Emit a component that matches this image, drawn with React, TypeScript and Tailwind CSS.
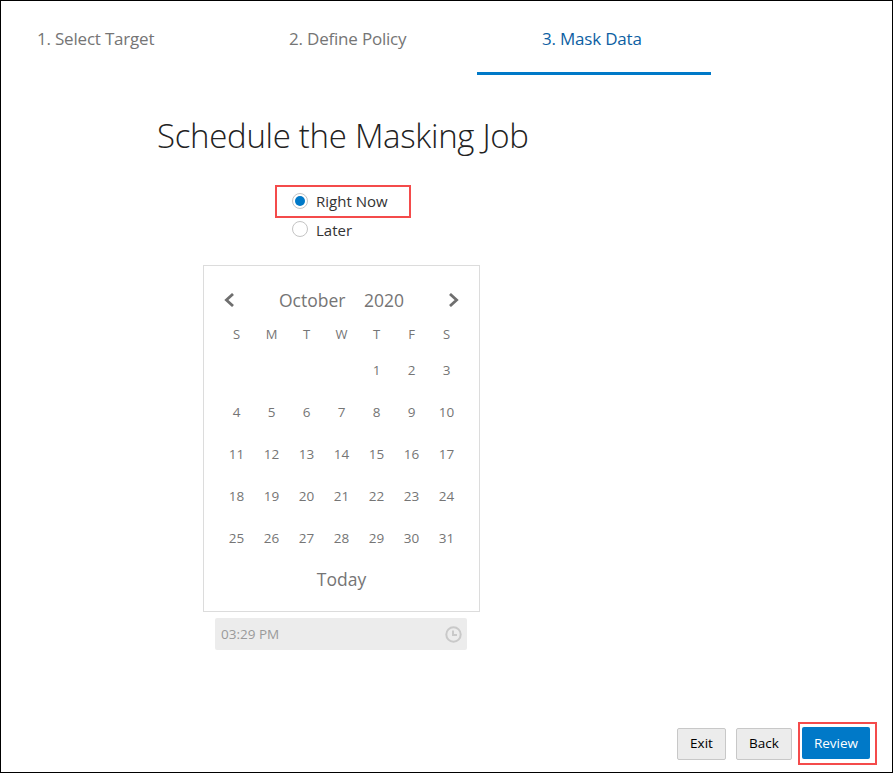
const weekdays = ["S", "M", "T", "W", "T", "F", "S"];
const leadingBlanks = 4;
const days = Array.from({ length: 31 }, (_, i) => i + 1);

function Tabs() {
  return (
    <nav className="flex h-[74px] text-[17px] leading-[76px] text-[#757575] whitespace-nowrap">
      <div className="w-[223px] pl-[36px]">
        <span className="tracking-[-0.2px]">1. Select Target</span>
      </div>
      <div className="w-[253px] pl-[65px]">
        <span className="tracking-[-0.2px]">2. Define Policy</span>
      </div>
      <div className="w-[234px] border-b-3 border-[#0079c8] pl-[65px] text-[#0d5fa3]">
        <span className="tracking-[-0.2px]">3. Mask Data</span>
      </div>
    </nav>
  );
}

function Radio({ checked }: { checked?: boolean }) {
  return (
    <span className="flex size-4 items-center justify-center rounded-full border border-[#c4c4c4] bg-white">
      {checked && <span className="size-[10px] rounded-full bg-[#0079c8]" />}
    </span>
  );
}

function Calendar() {
  return (
    <section className="ml-[202px] mt-[22px] h-[347px] w-[277px] border border-[#dcdcdc] text-[#757575]">
      <div className="mt-[20px] flex h-[28px] items-center pl-[20px] pr-[20px]">
        <svg width="10" height="14" viewBox="0 0 10 14" fill="none" stroke="#6f6f6f" strokeWidth="2.8">
          <path d="M9 1 2.4 7 9 13" />
        </svg>
        <div className="ml-[45px] w-[85px] text-[17.5px]">
          <span>October</span>
        </div>
        <div className="text-[17.5px]">
          <span>2020</span>
        </div>
        <svg className="ml-auto" width="10" height="14" viewBox="0 0 10 14" fill="none" stroke="#6f6f6f" strokeWidth="2.8">
          <path d="M1 1 7.600 7 1 13" />
        </svg>
      </div>
      <div className="ml-[15px] mt-[7px] grid w-[245px] grid-cols-7 text-center text-[13px] leading-[26px]">
        {weekdays.map((d, i) => (
          <span key={i}>{d}</span>
        ))}
      </div>
      <div className="ml-[15px] mt-[2px] grid w-[245px] grid-cols-7 text-center text-[13.5px] leading-[42px]">
        {Array.from({ length: leadingBlanks }, (_, i) => (
          <span key={`b${i}`} />
        ))}
        {days.map((d) => (
          <span key={d}>{d}</span>
        ))}
      </div>
      <div className="text-center text-[17.5px] leading-[40px]">
        <span>Today</span>
      </div>
    </section>
  );
}

export default function App() {
  return (
    <div className="flex h-[773px] w-[893px] flex-col border border-black bg-white font-['Open_Sans','Noto_Sans',sans-serif]">
      <Tabs />
      <h1 className="ml-[156px] mt-[37px] h-[48px] text-[33px] font-light leading-[48px] text-[#222] whitespace-nowrap">
        <span className="tracking-[-0.3px]">Schedule the Masking Job</span>
      </h1>
      <div className="ml-[274px] mt-[25px] text-[15px] text-[#333]">
        <div className="flex h-[33px] w-[136px] items-center gap-2 border-2 border-[#f44b4b] pl-[15px] pb-[2px] whitespace-nowrap">
          <Radio checked />
          <span className="relative top-px">Right Now</span>
        </div>
        <div className="flex h-[25px] items-center gap-2 pl-[17px] pb-[3px]">
          <Radio />
          <span className="relative top-px">Later</span>
        </div>
      </div>
      <Calendar />
      <div className="ml-[214px] mt-[6px] flex h-[32px] w-[252px] items-center rounded-[2px] bg-[#ececec] pl-[6px] pr-[5px] text-[13.5px] text-[#9a9a9a]">
        <span>03:29 PM</span>
        <svg className="ml-auto" width="17" height="17" viewBox="0 0 17 17" fill="none" stroke="#c9c9c9" strokeWidth="2">
          <circle cx="8.500" cy="8.500" r="7.200" />
          <path d="M8 4.500v4.500h4" />
        </svg>
      </div>
      <footer className="mr-[15px] mt-auto mb-[7px] flex items-center justify-end text-[13.5px] text-black">
        <button className="mr-[10px] h-[32px] w-[49px] rounded-[2px] border border-[#c8c8c8] bg-[#ececec]">
          <span>Exit</span>
        </button>
        <button className="mr-[6px] h-[32px] w-[56px] rounded-[2px] border border-[#c8c8c8] bg-[#ececec]">
          <span>Back</span>
        </button>
        <div className="flex h-[43px] w-[79px] border-2 border-[#f44b4b] pl-[2px] pt-[3px]">
          <button className="h-[32px] w-[68px] rounded-[2px] bg-[#0079c8] text-white">
            <span>Review</span>
          </button>
        </div>
      </footer>
    </div>
  );
}
